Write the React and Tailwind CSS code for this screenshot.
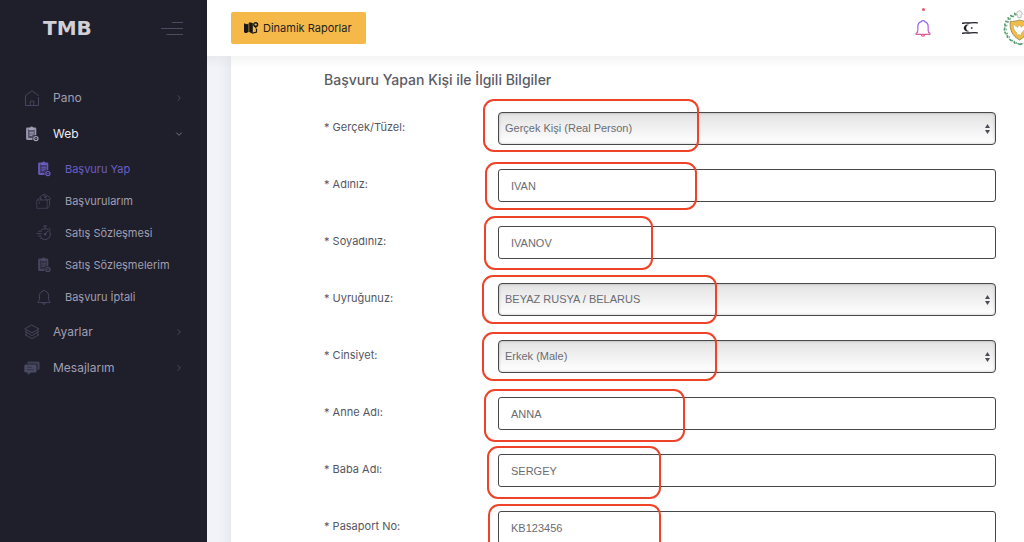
import React from "react";

const line = {
  viewBox: "0 0 16 16",
  fill: "none",
  stroke: "currentColor",
  strokeLinecap: "round",
  strokeLinejoin: "round",
  "aria-hidden": true,
};

function HomeIcon() {
  return (
    <svg {...line} strokeWidth="0.9" className="size-4">
      <path d="M1.5 15.5V5.5L8 .8l6.5 4.7M14.5 7.5v8H1.5M6.2 15.3v-4.2h3.6v4.2" />
    </svg>
  );
}

function ClipboardIcon() {
  return (
    <svg viewBox="0 0 16 16" className="size-4" aria-hidden="true">
      <path fill="currentColor" opacity="0.9" d="M4.5 1.6h1.4a1.8 1.8 0 0 1 3.4 0h1.5c.9 0 1.5.5 1.5 1.4v6.2h-1.8V3.4H4.3v8.7h4.2v1.8H3.6c-.9 0-1.5-.6-1.5-1.5V3c0-.9.6-1.4 1.4-1.4z" />
      <path fill="currentColor" d="M5 2.2h5.2v2.1H5zM5.4 5.8h4.5v.9H5.4zM5.4 7.5h4.5v.9H5.4zM5.4 9.2h3v.9h-3z" />
      <path fill="currentColor" opacity="0.35" d="M4.3 4.3h6.2v5.8L8.6 12H4.3z" />
      <circle cx="11.9" cy="12.6" r="2.1" fill="none" stroke="currentColor" strokeWidth="1.2" />
      <circle cx="11.9" cy="12.6" r="0.7" fill="currentColor" />
    </svg>
  );
}

function BagIcon() {
  return (
    <svg {...line} strokeWidth="0.7" className="size-4">
      <path d="M1.2 7h10v8.3h-10zM11.2 15.3l2.3-2V6.2L11.2 7M1.2 7l2.6-2.3 1.3 2.1M5.2 6.8l-.8-3.4 3.2-2 1 3 2.2-.8M7.6 1.5l1.2-.6 1.8 2.7M10.9 6.8 9.2 4.3l2.2-1.8 3.2 2.7-1.1 1.5M3.5 9v1.3" />
    </svg>
  );
}

function StopwatchIcon() {
  return (
    <svg {...line} strokeWidth="0.9" className="size-4">
      <path d="M5.2 5A5.5 5.5 0 1 1 5 13M7.6 1h3M9.1 1v2.2M13 3.3l1.3 1.1M9 9.2l2.6-3M2.5 6.2h3M.8 8.6h4.4M2.2 11h3M5.5 12.8l-.8.7" />
      <circle cx="9" cy="9.3" r="0.9" />
    </svg>
  );
}

function BellIcon({ stroke = "currentColor", width = "0.9", className = "size-4" }) {
  return (
    <svg {...line} stroke={stroke} strokeWidth={width} className={className}>
      <defs>
        <linearGradient id="bell" x1="0" y1="0" x2="0" y2="1">
          <stop offset="0" stopColor="#8a5cf5" />
          <stop offset="0.55" stopColor="#b465e0" />
          <stop offset="1" stopColor="#ec5f86" />
        </linearGradient>
      </defs>
      <path d="M6.6 2.3a1.5 1.5 0 0 1 2.8 0C11.6 2.9 12.6 4.6 12.6 6.8v3.4c0 1.3.5 2 1.5 2.5v.9H1.9v-.9c1-.5 1.5-1.200 1.500-2.500V6.800C3.400 4.600 4.400 2.900 6.600 2.300zM6.500 13.800a1.500 1.500 0 0 0 3 0" />
    </svg>
  );
}

function LayersIcon() {
  return (
    <svg {...line} strokeWidth="0.9" className="size-4">
      <path d="M8 1.200 15 5 8 8.800 1 5zM3 6.600 1 7.700l7 3.800 7-3.800-2-1.100M3 9.600l-2 1.100 7 3.900 7-3.900-2-1.100" />
    </svg>
  );
}

function ChatIcon() {
  return (
    <svg viewBox="0 0 16 16" className="size-4" aria-hidden="true">
      <path fill="currentColor" opacity="0.75" d="M4 1.500h10.200c.8 0 1.500.7 1.500 1.500v5.600c0 .8-.6 1.400-1.400 1.400h-.9V5.800c0-1.200-.8-2-2-2H3.200V2.400c0-.5.300-.9.800-.9z" />
      <path fill="currentColor" d="M1.800 4.600h9.300c.9 0 1.500.6 1.500 1.500v4.800c0 .9-.6 1.500-1.500 1.500H7L3.800 15v-2.600h-2c-.9 0-1.500-.6-1.500-1.500V6.100c0-.9.600-1.500 1.500-1.500z" />
      <path stroke="#1f1e2b" strokeWidth="0.8" opacity="0.6" d="M3.200 7.300h4.500M3.200 9.600h6.500" />
    </svg>
  );
}

function MapIcon() {
  return (
    <svg viewBox="0 0 16 14" className="h-3.5 w-4" aria-hidden="true">
      <path fill="#171717" d="M1 2.600c1-.2 1.600.6 2.600.6.900 0 1.300-.6 2-1v8.900c-1 .3-1.600 1-2.600 1C2.100 12.100 1 11.600 1 10.600zM6.200 1.300 9.800 2v10.700l-3.600-1.600z" />
      <path fill="none" stroke="#171717" strokeWidth="1.200" d="M9.600 12.300l3.900-1.300V7.600" />
      <circle cx="12.700" cy="3.600" r="1.900" fill="none" stroke="#171717" strokeWidth="1.400" />
      <path fill="#171717" d="M11 4.800h3.400l-1.700 2.600z" />
    </svg>
  );
}

function FlagIcon() {
  return (
    <svg viewBox="0 0 18 14" className="h-3.5 w-[18px]" aria-hidden="true">
      <path d="M1.700 2.200C5 1.300 7 2.400 10 1.900s4-.6 6.300 0M1.700 12.200c3.300-.9 5.300.2 8.300-.3s4-.6 6.300 0" fill="none" stroke="#1d1d22" strokeWidth="1.400" strokeLinecap="round" />
      <path fill="#1d1d22" d="M8.200 4A3.500 3.500 0 1 0 8.200 10 2.900 2.900 0 1 1 8.200 4zM10.800 5.800l.4.800.9.400-.9.400-.4.800-.4-.8-.9-.4.900-.4z" />
    </svg>
  );
}

const leaves = [
  [13, 5, 60], [9.5, 7, 30], [6.5, 9.5, 60], [4.5, 12.5, 20], [3, 16, 70],
  [2.5, 20, 100], [3.5, 24, 50], [5.5, 27.5, 90], [8.5, 31, 40], [12.5, 33.5, 70], [17, 35, 20],
];

function Emblem() {
  return (
    <svg viewBox="0 0 36 38" className="h-[38px] w-9" aria-hidden="true">
      <path d="M14 5.500C5 8.500 2.500 14 2.800 20c.5 8 6 14 15.200 15.200C27 34 32.700 28 33.200 20c.3-6-2.200-11.500-11.200-14.500" fill="none" stroke="#b5d3be" strokeWidth="0.7" />
      {leaves.map(([x, y, a]) => (
        <g key={y} fill="#5a9c72">
          <ellipse cx={x} cy={y} rx="1.700" ry="0.900" transform={`rotate(${a} ${x} ${y})`} />
          <ellipse cx={x + 1.8} cy={y + 0.5} rx="1.100" ry="0.500" transform={`rotate(${-a} ${x + 1.8} ${y + 0.5})`} />
          <ellipse cx={36 - x} cy={y} rx="1.700" ry="0.900" transform={`rotate(${-a} ${36 - x} ${y})`} />
        </g>
      ))}
      <path d="M15.600 6.600a2.700 2.700 0 1 1 3.600 0l-.3 2.100h-3z" fill="#f3f3f3" stroke="#a5a5a5" strokeWidth="0.700" />
      <path d="M8.300 12.300c3.200.3 6-.2 9.200-1.300 3.200 1.100 6 1.600 9.200 1.300 1 8.600-2.200 14.700-9.200 18.700-7-4-10.200-10.100-9.200-18.700z" fill="#f0bd48" stroke="#9a8a4c" strokeWidth="0.900" />
      <path d="M11.300 15c1.500 1.800 3.200 2 4.400 3.400l.8-2.200 1.800.3.900 1.800c1.300-1.500 2.900-1.900 4.300-3.300.3 4-1.200 7-3.600 8.400l-1.300 3.300-1.900-1.200-1.900.8-.2-2.600c-2.300-1.900-3.800-4.700-3.300-8.700z" fill="#fff" stroke="#b99645" strokeWidth="0.500" />
    </svg>
  );
}

function Chevron({ open }) {
  return (
    <svg viewBox="0 0 8 8" className="size-2" fill="none" stroke="currentColor" aria-hidden="true">
      {open ? <path d="M1.3 2.6 4 5.3l2.7-2.7" /> : <path d="M2.6 1.3 5.3 4 2.6 6.7" />}
    </svg>
  );
}

function NavItem({ icon, label, open }) {
  return (
    <li>
      <a href="#" className="flex h-9 items-center gap-[13px] px-6">
        <span className={open ? "text-[#a3a3bd]" : "text-[#494a63]"}>{icon}</span>
        <span className={open ? "flex-1 text-[#ededf2]" : "flex-1 text-[#a09fb2]"}>{label}</span>
        <span className={open ? "text-[#77778f]" : "text-[#4a4a60]"}>
          <Chevron open={open} />
        </span>
      </a>
    </li>
  );
}

const subItems = [
  { label: "Başvuru Yap", icon: <ClipboardIcon />, active: true },
  { label: "Başvurularım", icon: <BagIcon /> },
  { label: "Satış Sözleşmesi", icon: <StopwatchIcon /> },
  { label: "Satış Sözleşmelerim", icon: <ClipboardIcon /> },
  { label: "Başvuru İptali", icon: <BellIcon /> },
];

function Sidebar() {
  return (
    <aside className="flex w-[207px] shrink-0 flex-col bg-[#1f1e2b]">
      <div className="flex h-14 items-center justify-between pr-6 pl-[43px]">
        <a href="#" className="font-['DejaVu_Sans'] text-[20px] leading-5 font-bold text-[#d0d0d6]">TMB</a>
        <button type="button" aria-label="Menü" className="text-[#4c4b63]">
          <svg viewBox="0 0 22 14" className="h-3.5 w-[22px]" stroke="currentColor" strokeWidth="1" aria-hidden="true">
            <path d="M11 1.500h11M0 7.500h22M5.500 13.500H22" />
          </svg>
        </button>
      </div>
      <nav className="pt-6 text-[12px] leading-4">
        <ul>
          <NavItem icon={<HomeIcon />} label="Pano" />
          <NavItem icon={<ClipboardIcon />} label="Web" open />
          <li>
            <ul className="py-px text-[11px]">
              {subItems.map((item) => (
                <li key={item.label}>
                  <a href="#" className="flex h-8 items-center gap-[13px] pl-9">
                    <span className={item.active ? "text-[#6a5fc4]" : "text-[#494a63]"}>{item.icon}</span>
                    <span className={item.active ? "text-[#6a5fc4]" : "text-[#a09fb2]"}>{item.label}</span>
                  </a>
                </li>
              ))}
            </ul>
          </li>
          <NavItem icon={<LayersIcon />} label="Ayarlar" />
          <NavItem icon={<ChatIcon />} label="Mesajlarım" />
        </ul>
      </nav>
    </aside>
  );
}

function Header() {
  return (
    <header className="relative z-10 flex h-14 shrink-0 items-center justify-between overflow-hidden bg-white pl-6">
      <button type="button" className="flex h-8 items-center gap-1 rounded-xs bg-[#f5b94a] px-3 text-[11px] text-[#222]">
        <MapIcon />
        <span className="pr-0.5">Dinamik Raporlar</span>
      </button>
      <div className="flex shrink-0 items-center">
        <button type="button" aria-label="Bildirimler" className="relative mr-[29px]">
          <BellIcon stroke="url(#bell)" width="1.100" className="size-[18px]" />
          <span className="absolute -top-[11px] left-2 size-[3px] rounded-full bg-[#ee5566]" />
        </button>
        <button type="button" aria-label="Dil" className="mr-[23px]">
          <FlagIcon />
        </button>
        <button type="button" aria-label="Profil" className="-mr-[14px]">
          <Emblem />
        </button>
      </div>
    </header>
  );
}

const fields = [
  { id: "tip", label: "Gerçek/Tüzel", value: "Gerçek Kişi (Real Person)", select: true, mark: "-left-[15px] -top-[13px] h-[53px] w-[216px]" },
  { id: "ad", label: "Adınız", value: "IVAN", mark: "-left-[13px] -top-[7px] h-12 w-[212px]" },
  { id: "soyad", label: "Soyadınız", value: "IVANOV", mark: "-left-[14px] -top-[10px] h-[54px] w-[169px]" },
  { id: "uyruk", label: "Uyruğunuz", value: "BEYAZ RUSYA / BELARUS", select: true, mark: "-left-4 -top-2 h-[49px] w-[235px]" },
  { id: "cinsiyet", label: "Cinsiyet", value: "Erkek (Male)", select: true, mark: "-left-4 -top-2 h-[49px] w-[235px]" },
  { id: "anne", label: "Anne Adı", value: "ANNA", mark: "-left-[14px] -top-2 h-[53px] w-[201px]" },
  { id: "baba", label: "Baba Adı", value: "SERGEY", mark: "-left-[11px] -top-2 h-[53px] w-[174px]" },
  { id: "pasaport", label: "Pasaport No", value: "KB123456", mark: "-left-[10px] -top-[7px] h-[53px] w-[173px]" },
];

function Field({ id, label, value, select, mark }) {
  return (
    <div className="flex items-start">
      <label htmlFor={id} className="w-[174px] shrink-0 pt-[7px] text-[11px] leading-4 text-[#55565f]">
        * {label}:
      </label>
      <div className="relative flex-1">
        {select ? (
          <>
            <select
              id={id}
              defaultValue={value}
              className="block h-[33px] w-full appearance-none rounded-[4px] border border-[#48484a] bg-linear-to-b from-[#e3e3e3] to-white px-1.5 font-['Liberation_Sans',sans-serif] text-[11px] text-[#6a6c72] shadow-[inset_0_0_3px_rgba(0,0,0,0.25)]"
            >
              <option>{value}</option>
            </select>
            <svg viewBox="0 0 5 10" className="pointer-events-none absolute top-3 right-[6px] h-2.5 w-[5px]" fill="#4b4b55" aria-hidden="true">
              <path d="M2.500 0 5 4H0zM0 6h5l-2.500 4z" />
            </svg>
          </>
        ) : (
          <input
            id={id}
            type="text"
            defaultValue={value}
            className="block h-[33px] w-full rounded-[3px] border border-[#48484a] bg-white px-3 font-['Liberation_Sans',sans-serif] text-[11px] text-[#6a6c72]"
          />
        )}
        <span aria-hidden="true" className={`pointer-events-none absolute rounded-[11px] border-2 border-[#ee4328] ${mark}`} />
      </div>
    </div>
  );
}

export default function App() {
  return (
    <div lang="tr" className="flex h-screen overflow-hidden bg-[#f2f3f8] font-[Inter,sans-serif]">
      <Sidebar />
      <div className="flex min-w-0 flex-1 flex-col">
        <Header />
        <main className="relative min-h-0 flex-1 overflow-hidden pl-6">
          <div className="pointer-events-none absolute inset-x-0 top-0 z-10 h-3 bg-linear-to-b from-black/4 to-transparent" />
          <form className="min-h-full bg-white pt-[14px] pr-7 pb-10 pl-[93px] shadow-[0_0_13px_rgba(82,63,105,0.12)]">
            <h2 className="mb-[22px] text-[14px] leading-5 font-medium text-[#5b5c66]">
              Başvuru Yapan Kişi ile İlgili Bilgiler
            </h2>
            <div className="flex flex-col gap-6">
              {fields.map((f) => (
                <Field key={f.id} {...f} />
              ))}
            </div>
          </form>
        </main>
      </div>
    </div>
  );
}
